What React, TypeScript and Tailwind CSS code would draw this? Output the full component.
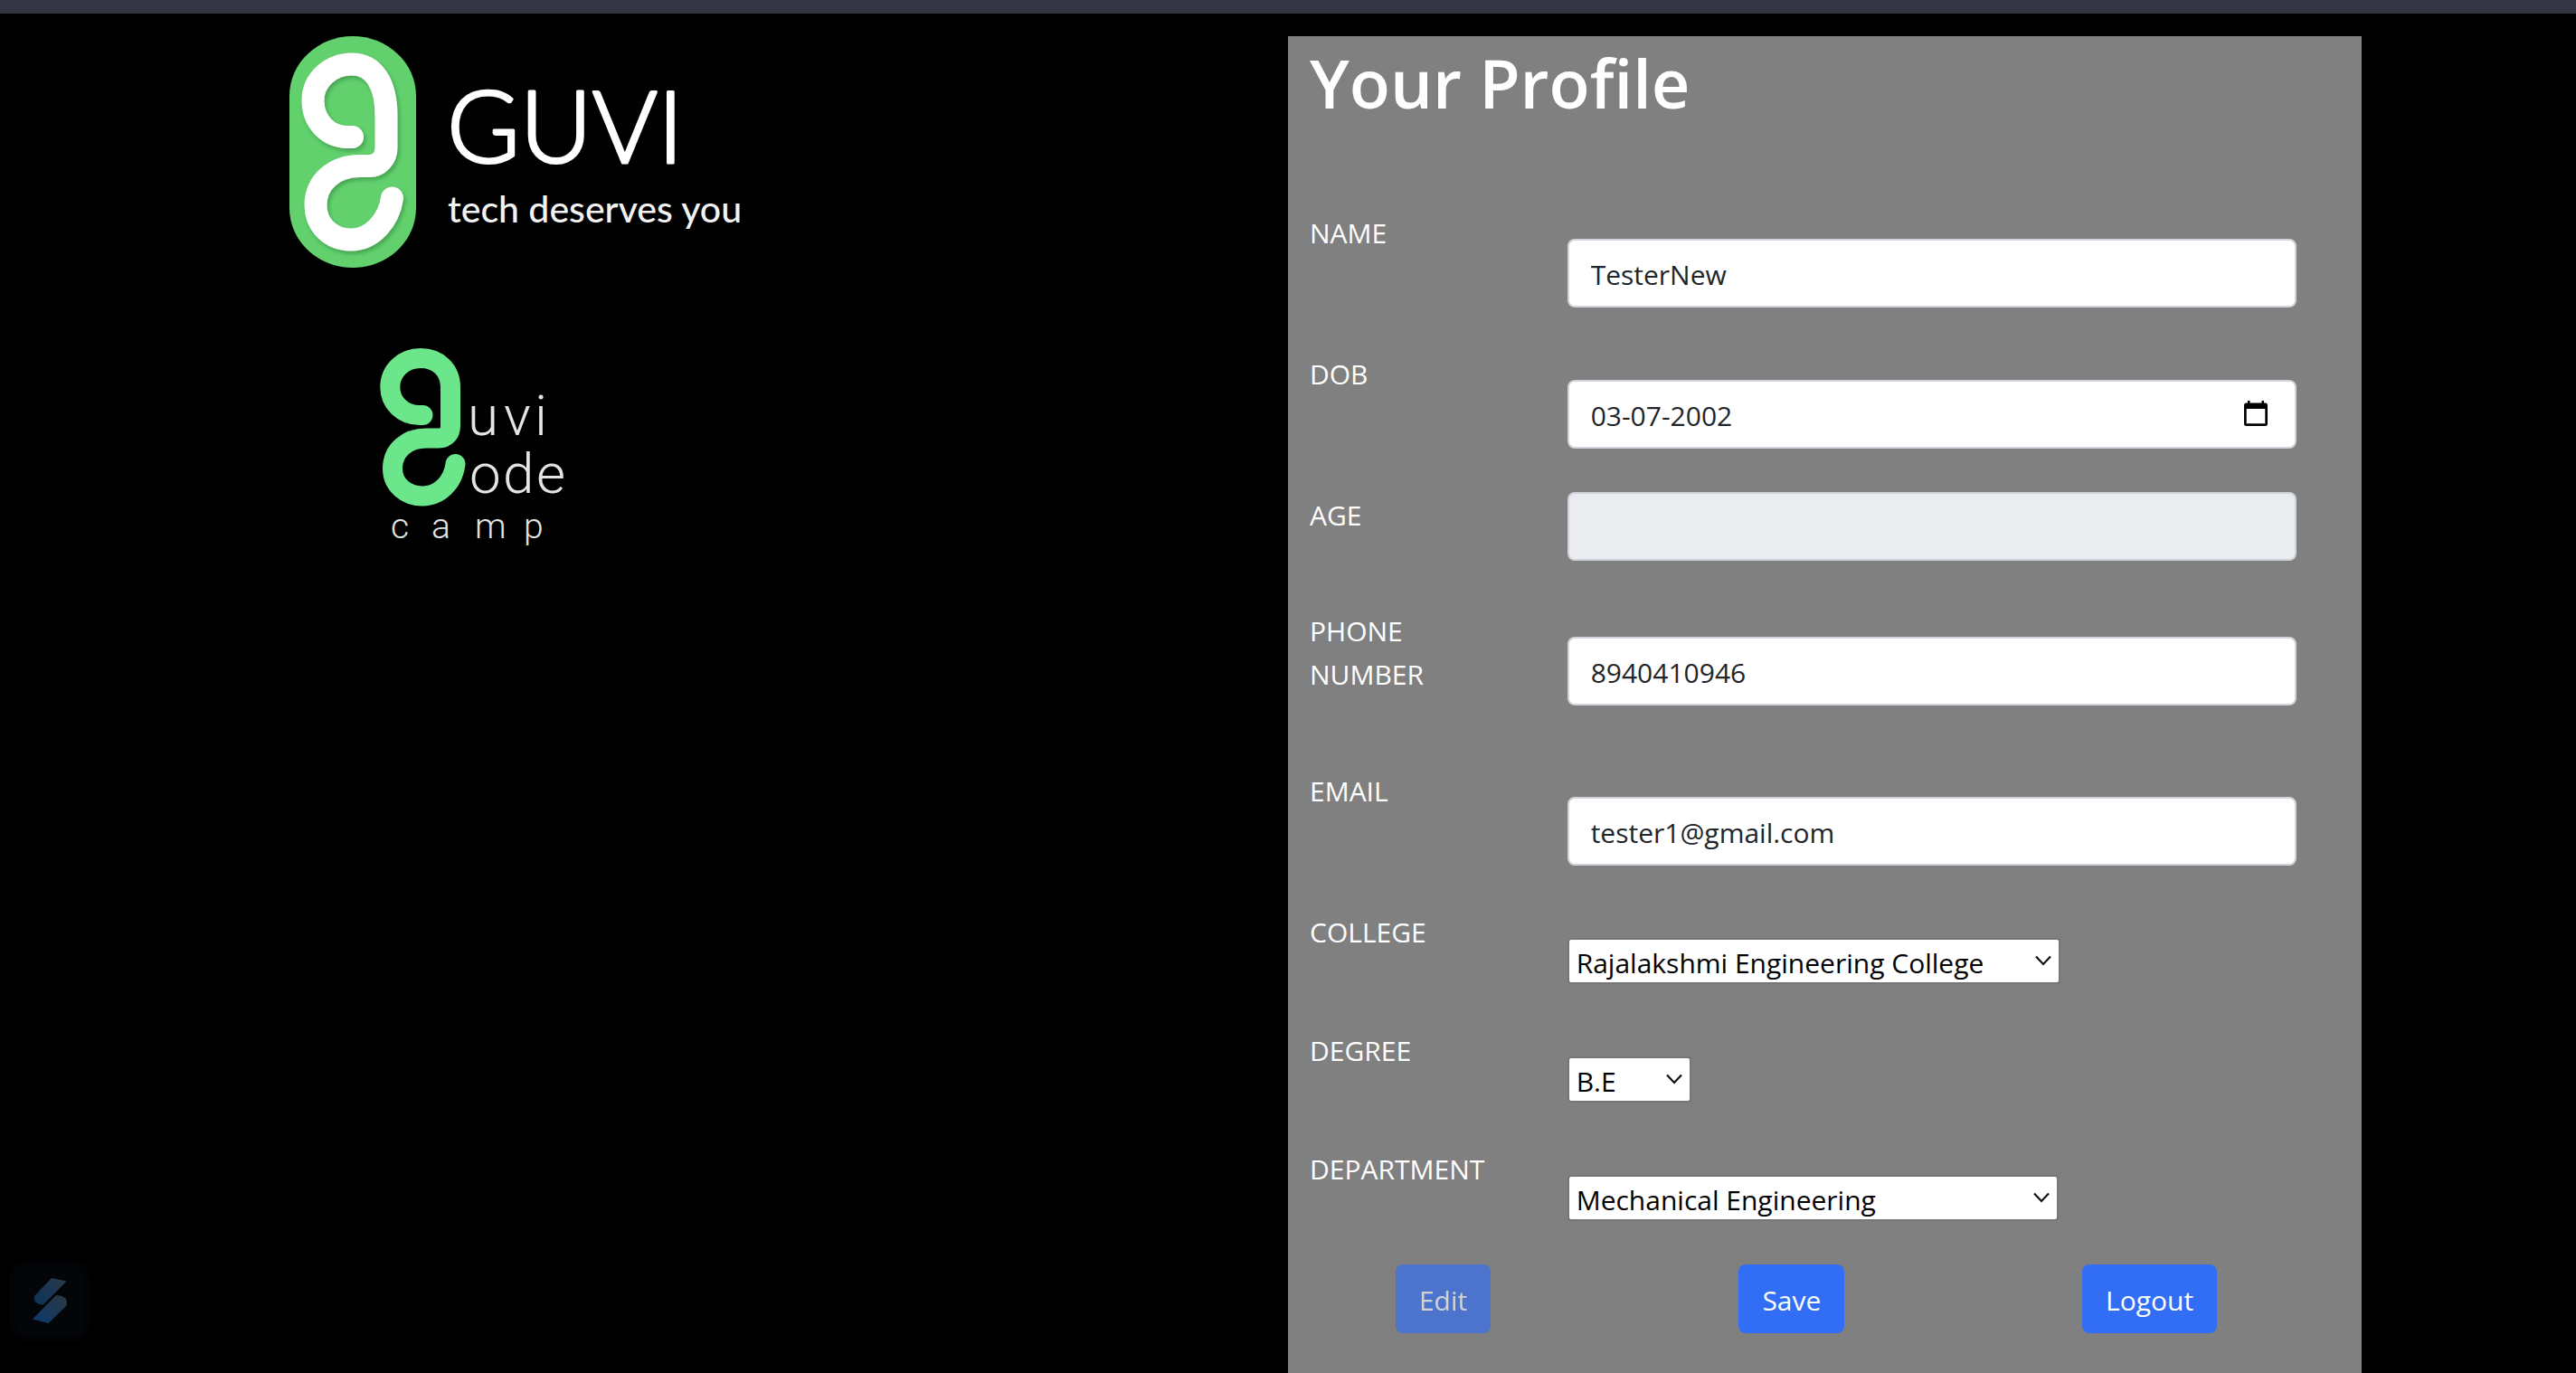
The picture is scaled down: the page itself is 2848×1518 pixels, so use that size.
import type { ReactNode } from "react";

function GuviLogo() {
  return (
    <svg viewBox="0 0 520 256" className="h-64 w-[520px] max-w-full" role="img" aria-label="GUVI, tech deserves you">
      <defs>
        <filter id="soft-shadow" x="-40%" y="-20%" width="180%" height="140%">
          <feDropShadow dx="2" dy="3" stdDeviation="2" floodColor="#1d5c2b" floodOpacity="0.4" />
        </filter>
      </defs>
      <path
        d="M0 66C0 29 32 0 70 0S140 29 140 66V190C140 227 108 256 70 256S0 227 0 190Z"
        fill="#62d06d"
      />
      <path
        d="M69.600 111.500H64C42 111 26 94 26 71C26 48 46 31 69 31C93 31 107 52 107 88V123C107 135 99 143.500 88 143.500H78C50 143.500 29 161 29 187C29 209 46 225 68 225C92 225 110 203 113.500 179"
        fill="none"
        stroke="#ffffff"
        strokeWidth="25"
        strokeLinecap="round"
        filter="url(#soft-shadow)"
      />
      <text
        x="174"
        y="140"
        fontSize="110"
        fontWeight="300"
        fontFamily="Lato, sans-serif"
        fill="#ffffff"
        stroke="#ffffff"
        strokeWidth="3"
        strokeLinejoin="round"
      >
        GUVI
      </text>
      <text x="175" y="206" fontSize="41" fontWeight="500" fontFamily="Lato, sans-serif" fill="#f2f2f2">
        tech deserves you
      </text>
    </svg>
  );
}

function CodeCampLogo() {
  return (
    <svg viewBox="0 0 210 222" className="ml-[100px] h-[222px] w-[210px]" role="img" aria-label="guvi code camp">
      <path
        d="M47.500 74H44C25 74 11.300 60 11.300 43C11.300 25 26 11 45 11C64 11 78 24 78 43V86C78 94 73 99.500 65 99.500H51C30 99.500 14 113 14 133C14 151 29 163.500 47 163.500C66 163.500 81 148 83.500 128"
        fill="none"
        stroke="#6be68b"
        strokeWidth="22"
        strokeLinecap="round"
      />
      <g fontFamily="Roboto, sans-serif" fontWeight="300" fill="#e4e4e4">
        <text x="97 137 171" y="96" fontSize="62">uvi</text>
        <text x="99 136 173" y="160" fontSize="62">ode</text>
        <text x="12 57 105 159" y="210" fontSize="39">camp</text>
      </g>
    </svg>
  );
}

function CornerBadge() {
  return (
    <button
      type="button"
      aria-label="Open extension"
      className="fixed bottom-[35px] left-[10px] flex size-[90px] items-center justify-center rounded-[22px] border-[6px] border-[#020305] bg-[#030509]"
    >
      <svg viewBox="0 0 38 50" className="h-[50px] w-[38px]" aria-hidden="true">
        <defs>
          <linearGradient id="badge-top" x1="1" y1="0" x2="0" y2="1">
            <stop offset="0" stopColor="#2b3b4c" />
            <stop offset="1" stopColor="#0b3158" />
          </linearGradient>
          <linearGradient id="badge-bottom" x1="1" y1="0" x2="0" y2="1">
            <stop offset="0" stopColor="#2c3743" />
            <stop offset="1" stopColor="#0a3a6c" />
          </linearGradient>
        </defs>
        <path d="M21 0L37.500 3.500L12 29.500C7 30 2 27.500 2 23V20Z" fill="url(#badge-top)" />
        <path d="M26 19C33 19 38 22 38 27C38 29.500 37 31 35.500 32.500L17.500 50L0 45.500Z" fill="url(#badge-bottom)" />
      </svg>
    </button>
  );
}

function CalendarIcon() {
  return (
    <svg viewBox="0 0 26 28" className="h-7 w-[26px]" aria-hidden="true">
      <path
        fillRule="evenodd"
        d="M4 0H6.500V2.500H19.500V0H22V2.500H23.500Q26 2.500 26 5V25.500Q26 28 23.500 28H2.500Q0 28 0 25.500V5Q0 2.500 2.500 2.500H4ZM2.700 9V25.300H23.300V9Z"
        fill="#000000"
      />
    </svg>
  );
}

const inputClass =
  "block h-[76px] w-full rounded-lg border-2 border-[#ced4da] bg-white px-6 pt-0.5 text-[30px] text-[#212529] disabled:bg-[#eaecf0]";

type FieldProps = { id: string; label: string; className: string; children: ReactNode };

function Field({ id, label, className, children }: FieldProps) {
  return (
    <div className={`grid grid-cols-4 ${className}`}>
      <label htmlFor={id} className="pt-0.5 pr-16 text-[30px] leading-[48px] text-white">
        {label}
      </label>
      <div className="col-span-3 pr-12">{children}</div>
    </div>
  );
}

type SelectProps = { id: string; width: string; options: string[] };

function Select({ id, width, options }: SelectProps) {
  return (
    <div className={`relative mt-8 ${width}`}>
      <select
        id={id}
        defaultValue={options[0]}
        className="block h-[51px] w-full appearance-none rounded-[4px] border-2 border-[#767676] bg-white px-2 pt-0.5 text-[30px] leading-[47px] text-black"
      >
        {options.map((option) => (
          <option key={option}>{option}</option>
        ))}
      </select>
      <svg
        viewBox="0 0 18 12"
        className="pointer-events-none absolute top-[19px] right-[10px] h-3 w-[18px]"
        aria-hidden="true"
      >
        <path d="M1 1.500L9 10L17 1.500" fill="none" stroke="#101010" strokeWidth="2.200" />
      </svg>
    </div>
  );
}

const buttonClass =
  "h-[76px] rounded-lg bg-[#316ef5] px-[26px] pt-0.5 text-[30px] text-white disabled:opacity-65";

export default function App() {
  return (
    <div className="flex min-h-screen flex-col bg-black font-['Open_Sans',sans-serif]">
      <header className="h-[15px] bg-[#333543]" />
      <main className="grid flex-1 grid-cols-12 pt-[25px]">
        <section className="col-span-5 col-start-2 flex flex-col items-start gap-[89px] pl-[83px]">
          <GuviLogo />
          <CodeCampLogo />
        </section>
        <section className="col-span-5 bg-[#808080] px-6">
          <h1 className="mb-[88px] text-[74px] leading-[104px] font-semibold text-white">Your Profile</h1>
          <form onSubmit={(event) => event.preventDefault()}>
            <Field id="name" label="NAME" className="mb-12">
              <input id="name" type="text" defaultValue="TesterNew" className={`mt-8 ${inputClass}`} />
            </Field>
            <Field id="dob" label="DOB" className="mb-12">
              <div className="relative mt-8">
                <input id="dob" type="text" defaultValue="03-07-2002" className={inputClass} />
                <button type="button" aria-label="Choose date" className="absolute top-[23px] right-8">
                  <CalendarIcon />
                </button>
              </div>
            </Field>
            <Field id="age" label="AGE" className="mb-[52px]">
              <input id="age" type="text" disabled className={inputClass} />
            </Field>
            <Field id="phone" label="PHONE NUMBER" className="mb-[69px]">
              <input id="phone" type="tel" defaultValue="8940410946" className={`mt-8 ${inputClass}`} />
            </Field>
            <Field id="email" label="EMAIL" className="mb-12">
              <input id="email" type="email" defaultValue="tester1@gmail.com" className={`mt-8 ${inputClass}`} />
            </Field>
            <Field id="college" label="COLLEGE" className="mb-12">
              <Select id="college" width="w-[545px]" options={["Rajalakshmi Engineering College"]} />
            </Field>
            <Field id="degree" label="DEGREE" className="mb-12">
              <Select id="degree" width="w-[137px]" options={["B.E"]} />
            </Field>
            <Field id="department" label="DEPARTMENT" className="mb-12">
              <Select id="department" width="w-[543px]" options={["Mechanical Engineering"]} />
            </Field>
            <div className="grid grid-cols-3">
              <div className="pl-[25%]">
                <button type="button" disabled className={buttonClass}>Edit</button>
              </div>
              <div className="pl-[25%]">
                <button type="submit" className={buttonClass}>Save</button>
              </div>
              <div className="pl-[25%]">
                <button type="button" className={buttonClass}>Logout</button>
              </div>
            </div>
          </form>
        </section>
      </main>
      <CornerBadge />
    </div>
  );
}
